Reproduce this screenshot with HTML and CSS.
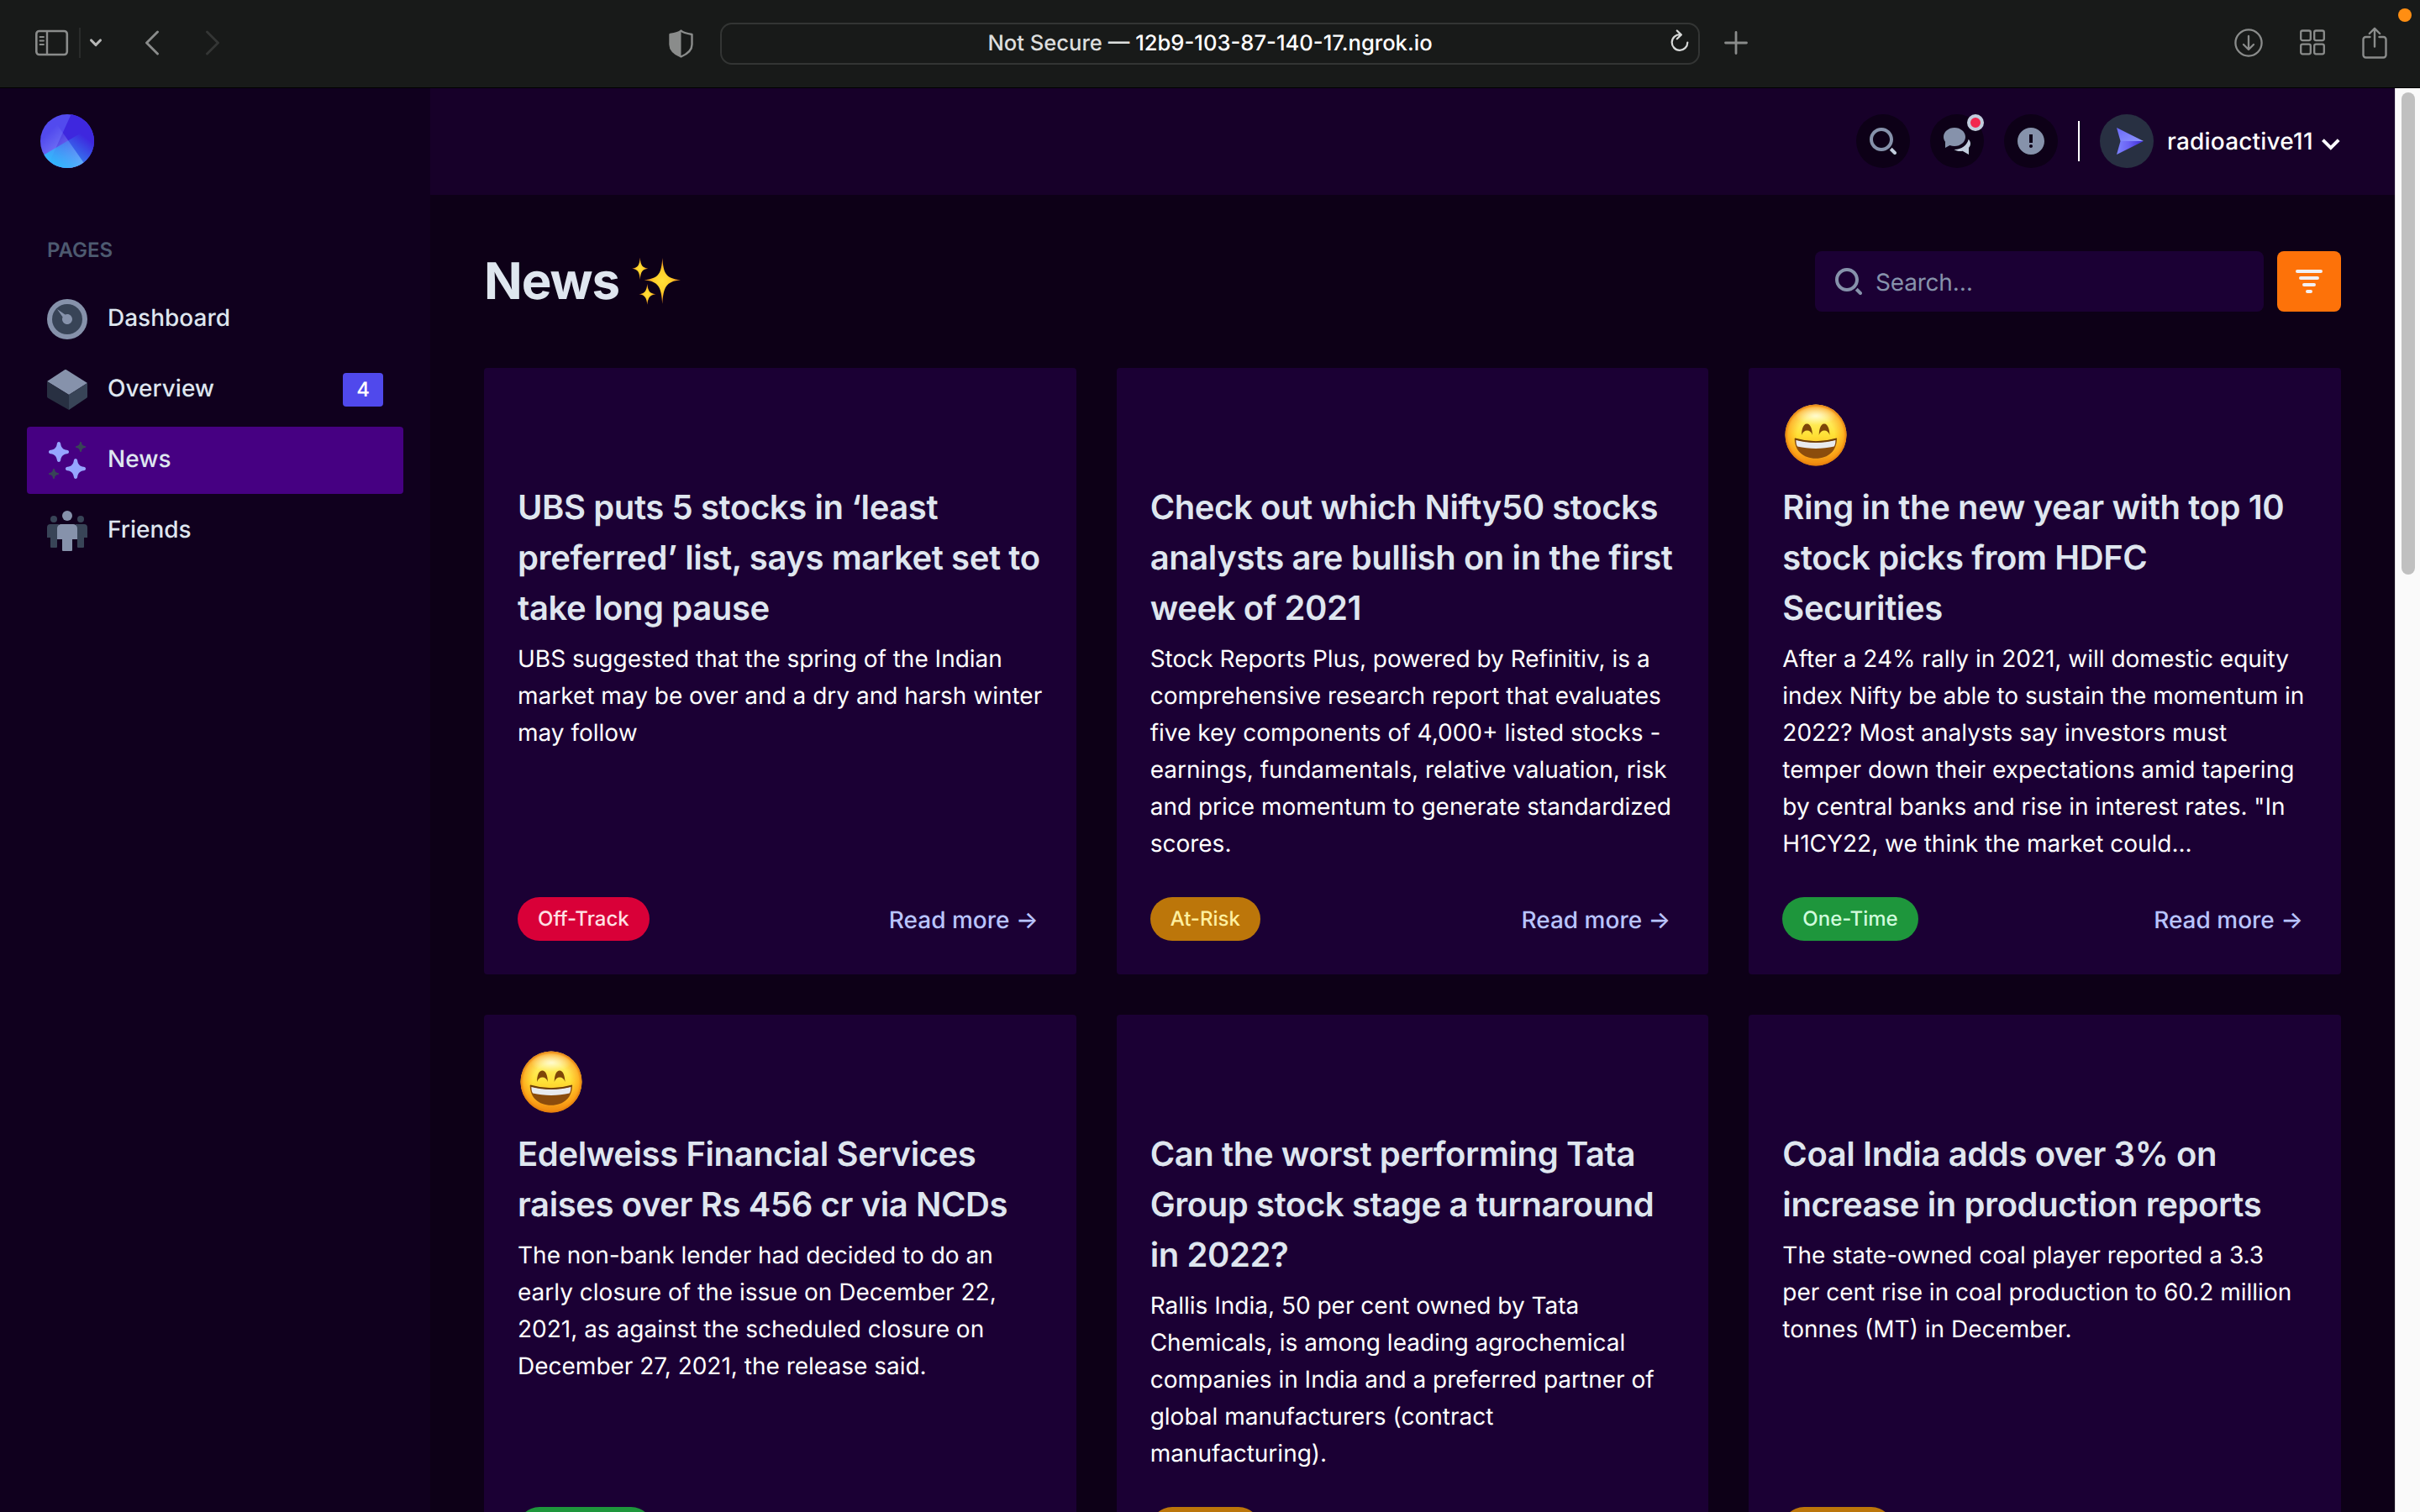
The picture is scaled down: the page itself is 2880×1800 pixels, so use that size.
FILE: index.html
```html
<!DOCTYPE html>
<html lang="en">
<head>
<meta charset="utf-8">
<title>News</title>
<link rel="stylesheet" href="styles.css">
</head>
<body>
<svg class="defs" width="0" height="0" aria-hidden="true">
  <defs>
    <linearGradient id="logo-a" x1="28.538%" y1="20.229%" x2="100%" y2="108.156%"><stop stop-color="#9fb0ff" stop-opacity="0" offset="0%"/><stop stop-color="#9fb0ff" offset="100%"/></linearGradient>
    <linearGradient id="logo-b" x1="88.638%" y1="29.267%" x2="22.42%" y2="100%"><stop stop-color="#2db9fd" stop-opacity="0" offset="0%"/><stop stop-color="#2db9fd" offset="100%"/></linearGradient>
    <linearGradient id="plane-top" x1="0" y1="0" x2="1" y2="1"><stop stop-color="#6a68f8" offset="0"/><stop stop-color="#8f97ff" offset="1"/></linearGradient>
    <linearGradient id="plane-bottom" x1="0" y1="0" x2="1" y2="0"><stop stop-color="#7d83ff" offset="0"/><stop stop-color="#6a62f4" offset=".45"/><stop stop-color="#3a28d4" offset="1"/></linearGradient>
    <radialGradient id="star-fill"><stop stop-color="#ffe03a" offset="0"/><stop stop-color="#ffcf2a" offset=".45"/><stop stop-color="#e8801c" offset="1"/></radialGradient>
    <linearGradient id="face-fill" x1="0" y1="0" x2="0" y2="1"><stop stop-color="#ffe98a" offset="0"/><stop stop-color="#fff06a" offset=".2"/><stop stop-color="#ffe136" offset=".5"/><stop stop-color="#fbb01e" offset=".82"/><stop stop-color="#dd7c0a" offset="1"/></linearGradient>
    <radialGradient id="face-rim" cx=".5" cy=".5" r=".5"><stop stop-color="#ff9a10" stop-opacity="0" offset=".6"/><stop stop-color="#fb9412" stop-opacity=".6" offset=".9"/><stop stop-color="#e07a0c" offset="1"/></radialGradient>
    <radialGradient id="face-shine" cx=".5" cy=".5" r=".5"><stop stop-color="#fffff0" stop-opacity=".75" offset="0"/><stop stop-color="#fffde0" stop-opacity="0" offset="1"/></radialGradient>
    <symbol id="face" viewBox="0 0 74 74">
      <circle cx="37" cy="37" r="36.500" fill="url(#face-fill)"/>
      <circle cx="37" cy="37" r="36.500" fill="url(#face-rim)"/>
      <ellipse cx="37" cy="14" rx="24" ry="11" fill="url(#face-shine)"/>
      <path d="M20 37c.2-8.500 2.500-13.500 6.400-13.500S32.600 28.500 33 37c-1.700-7.500-11-7.500-13 0zM40.700 37c.2-8.500 2.500-13.500 6.300-13.500s6.100 5 6.500 13.500c-1.700-7.500-11-7.500-12.800 0z" fill="#7e4608"/>
      <path d="M11.700 41c16 4.800 34.300 4.800 50.300 0C62 55.500 52 64.800 37 64.800S11.700 55.500 11.700 41z" fill="#8b4c0c"/>
      <path d="M13.400 43c15 4 32 4 47 0 0 3.500-.6 5.800-1.700 7.600-13.500 3.300-30 3.300-43.600 0-1.100-1.800-1.700-4.100-1.700-7.600z" fill="#e8eaee"/>
      <path d="M12 41.200c16 4.800 34 4.800 50 0" fill="none" stroke="#6b3c08" stroke-width="1.600"/>
    </symbol>
    <symbol id="magnifier" viewBox="0 0 16 16">
      <path d="M7 14c-3.860 0-7-3.140-7-7s3.140-7 7-7 7 3.140 7 7-3.140 7-7 7zM7 2C4.243 2 2 4.243 2 7s2.243 5 5 5 5-2.243 5-5-2.243-5-5-5z"/>
      <path fill="currentColor" d="M15.707 14.293L13.314 11.900a8.019 8.019 0 01-1.414 1.414l2.393 2.393a.997.997 0 001.414 0 .999.999 0 000-1.414z"/>
    </symbol>
  </defs>
</svg>

<div class="toolbar">
  <div class="tools">
    <svg class="i-panel" width="40" height="32" viewBox="0 0 40 32" fill="none" stroke="#8a8c8b"><rect x="1.300" y="2" width="36.500" height="28" rx="3.500" stroke-width="2.600"/><path d="M14 2v28" stroke-width="2.400"/><path d="M5.500 9h4.500M5.500 13.500h4.500M5.500 18h4.500" stroke-width="1.800" stroke-linecap="round"/></svg>
    <span class="tool-rule"></span>
    <svg class="i-down" width="16" height="12" viewBox="0 0 16 12" fill="none" stroke="#b6b7b6" stroke-width="3.200" stroke-linecap="round" stroke-linejoin="round"><path d="M2.600 3l5.400 5.500L13.400 3"/></svg>
    <svg class="i-back" width="18" height="30" viewBox="0 0 18 30" fill="none" stroke="#8a8c8b" stroke-width="2.900" stroke-linecap="round" stroke-linejoin="round"><path d="M15.500 2L2.500 15l13 13"/></svg>
    <svg class="i-forward" width="18" height="30" viewBox="0 0 18 30" fill="none" stroke="#343635" stroke-width="2.900" stroke-linecap="round" stroke-linejoin="round"><path d="M2.500 2l13 13-13 13"/></svg>
  </div>
  <svg class="i-shield" width="29" height="34" viewBox="0 0 29 34"><path d="M14.500 1.500C17 4 22 5 27.500 6v12c0 7-6 11.500-13 14.500-7-3-13-7.500-13-14.500V6C7 5 12 4 14.500 1.500z" fill="none" stroke="#8a8c8b" stroke-width="2.400" stroke-linejoin="round"/><path d="M14.500 1v32C7 30 1 25 1 18V6c5.500-1 11-2 13.500-5z" fill="#8a8c8b"/></svg>
  <div class="address">
    <span class="url"><span class="insecure">Not Secure — </span>12b9-103-87-140-17.ngrok.io</span>
    <svg class="i-reload" width="24" height="28" viewBox="0 0 24 28" fill="none" stroke="#d8dad9" stroke-width="2.200" stroke-linecap="round" stroke-linejoin="round"><path d="M12.500 6.200A9.300 9.300 0 1 0 21.300 15.500M8.800 1.500l5 4.900-5 4.900"/></svg>
  </div>
  <svg class="i-plus" width="28" height="28" viewBox="0 0 28 28" stroke="#8a8c8b" stroke-width="2.800" stroke-linecap="round"><path d="M14 1.500v25M1.500 14h25"/></svg>
  <div class="tools-right">
    <svg width="34" height="38" viewBox="0 0 34 38" fill="none" stroke="#8a8c8b" stroke-width="2.300" stroke-linecap="round" stroke-linejoin="round"><circle cx="17" cy="19" r="15.600"/><path d="M17 11v15.500M11 21l6 6 6-6"/></svg>
    <svg width="30" height="38" viewBox="0 0 30 38" fill="none" stroke="#8a8c8b" stroke-width="2.300"><rect x="1.200" y="4.500" width="11.600" height="11.600" rx="2"/><rect x="17.200" y="4.500" width="11.600" height="11.600" rx="2"/><rect x="1.200" y="20.700" width="11.600" height="11.600" rx="2"/><rect x="17.200" y="20.700" width="11.600" height="11.600" rx="2"/></svg>
    <svg width="30" height="38" viewBox="0 0 30 38" fill="none" stroke="#8a8c8b" stroke-width="2.400" stroke-linecap="round" stroke-linejoin="round"><path d="M9.500 12H4.500a3 3 0 0 0-3 3v18.500a3 3 0 0 0 3 3h21a3 3 0 0 0 3-3V15a3 3 0 0 0-3-3h-5M15 23.500V2M8.800 8L15 1.800 21.200 8"/></svg>
  </div>
  <span class="rec-dot"></span>
</div>

<div class="app">
  <aside class="sidebar">
    <svg class="logo" width="64" height="64" viewBox="0 0 32 32"><rect fill="#524aee" width="32" height="32" rx="16"/><path d="M18.277.16C26.035 1.267 32 7.938 32 16c0 8.837-7.163 16-16 16a15.937 15.937 0 01-10.426-3.863L18.277.161z" fill="#3e27de"/><path d="M7.404 2.503l18.339 26.190A15.930 15.930 0 0116 32C7.163 32 0 24.837 0 16 0 10.327 2.952 5.344 7.404 2.503z" fill="url(#logo-a)"/><path d="M2.223 24.140L29.777 7.860A15.926 15.926 0 0132 16c0 8.837-7.163 16-16 16-5.864 0-10.991-3.154-13.777-7.860z" fill="url(#logo-b)"/></svg>
    <h3 class="group">Pages</h3>
    <nav class="nav">
      <a class="nav-item">
        <svg class="nav-icon" viewBox="0 0 24 24"><circle cx="12" cy="12" r="12" fill="#8692ab"/><circle cx="12" cy="12" r="9" fill="#384457"/><path d="M12 15c-1.654 0-3-1.346-3-3 0-.462.113-.894.3-1.285L6 6l4.714 3.301A2.973 2.973 0 0112 9c1.654 0 3 1.346 3 3s-1.346 3-3 3z" fill="#8692ab"/></svg>
        <span>Dashboard</span>
      </a>
      <a class="nav-item">
        <svg class="nav-icon" viewBox="0 0 24 24"><path fill="#8692ab" d="M13 15l11-7L11.504.136a1 1 0 00-1.019.007L0 7l13 8z"/><path fill="#283042" d="M13 15L0 7v9c0 .355.189.685.496.864L13 24v-9z"/><path fill="#384457" d="M13 15.047V24l10.573-7.181A.999.999 0 0024 16V8l-11 7.047z"/></svg>
        <span>Overview</span>
        <span class="count">4</span>
      </a>
      <a class="nav-item active">
        <svg class="nav-icon" viewBox="0 0 24 24"><path fill="#96a5ff" d="M7 1c.7 0 1 .5 1.100 1.200.3 2.200 1.500 3.400 3.700 3.700C12.600 6 13 6.300 13 7s-.4 1-1.200 1.100c-2.200.3-3.400 1.500-3.700 3.700C8 12.600 7.700 13 7 13s-1-.4-1.100-1.200C5.600 9.600 4.400 8.400 2.200 8.100 1.400 8 1 7.700 1 7s.4-1 1.200-1.100c2.200-.3 3.400-1.500 3.700-3.700C6 1.500 6.300 1 7 1zM17 11c.7 0 1 .5 1.100 1.200.3 2.200 1.500 3.400 3.700 3.700.8.1 1.200.4 1.200 1.100s-.4 1-1.200 1.100c-2.200.3-3.400 1.500-3.700 3.700-.1.800-.4 1.200-1.100 1.200s-1-.4-1.100-1.200c-.3-2.200-1.500-3.400-3.700-3.700-.8-.1-1.200-.4-1.200-1.100s.4-1 1.200-1.100c2.200-.3 3.400-1.500 3.700-3.700.1-.7.400-1.200 1.100-1.200z"/><path fill="#384457" d="M20 1c.35 0 .5.250.55.600.15 1.100.75 1.700 1.850 1.850.4.050.6.200.6.550s-.2.500-.6.550c-1.100.15-1.700.75-1.850 1.850-.05.400-.2.600-.55.600s-.5-.2-.55-.6C19.300 5.300 18.700 4.700 17.600 4.550 17.200 4.500 17 4.350 17 4s.2-.5.600-.55c1.100-.15 1.700-.75 1.850-1.850.05-.35.200-.6.550-.6zM4 17c.35 0 .5.250.55.600.15 1.100.75 1.700 1.850 1.850.4.050.6.200.6.550s-.2.500-.6.550c-1.100.15-1.700.75-1.850 1.850-.05.400-.2.600-.55.600s-.5-.2-.55-.6c-.15-1.100-.75-1.700-1.850-1.850C1.200 20.500 1 20.350 1 20s.2-.5.600-.55c1.100-.15 1.700-.75 1.850-1.850.05-.35.200-.6.550-.6z"/></svg>
        <span>News</span>
      </a>
      <a class="nav-item">
        <svg class="nav-icon" viewBox="0 0 24 24"><g fill="#384457"><circle cx="4" cy="5" r="2"/><circle cx="20" cy="5" r="2"/><path d="M2 8h5v8H6v5.500a.5.500 0 0 1-.5.500h-3a.5.500 0 0 1-.5-.5V16H0v-6a2 2 0 0 1 2-2zM22 8h-5v8h1v5.500a.5.500 0 0 0 .5.500h3a.5.500 0 0 0 .5-.5V16h2v-6a2 2 0 0 0-2-2z"/></g><g fill="#8692ab"><circle cx="12" cy="3" r="3"/><path d="M8.500 8h7A2.500 2.500 0 0 1 18 10.500V17h-3v6.500a.5.500 0 0 1-.5.500h-5a.5.500 0 0 1-.5-.5V17H6v-6.500A2.500 2.500 0 0 1 8.500 8z"/></g></svg>
        <span>Friends</span>
      </a>
    </nav>
  </aside>

  <div class="content">
    <header class="header">
      <button class="round"><svg class="two-tone" width="32" height="32"><use href="#magnifier"/></svg></button>
      <button class="round"><svg width="32" height="32" viewBox="0 0 16 16"><path fill="#8692ab" d="M6.500 0C2.910 0 0 2.462 0 5.500c0 1.075.37 2.074 1 2.922V12l2.699-1.542A7.454 7.454 0 006.500 11c3.590 0 6.500-2.462 6.500-5.500S10.090 0 6.500 0z"/><path fill="#c2cddd" d="M16 9.500c0-.987-.429-1.897-1.147-2.639C14.124 10.348 10.660 13 6.500 13c-.103 0-.202-.018-.305-.021C7.231 13.617 8.556 14 10 14c.449 0 .886-.04 1.307-.11L15 16v-4h-.012C15.627 11.285 16 10.425 16 9.500z"/></svg><span class="unread"></span></button>
      <button class="round"><svg width="32" height="32" viewBox="0 0 16 16"><path fill="#8692ab" d="M8 0C3.600 0 0 3.600 0 8s3.600 8 8 8 8-3.600 8-8-3.600-8-8-8zm0 12c-.6 0-1-.4-1-1s.4-1 1-1 1 .4 1 1-.4 1-1 1zm1-3H7V4h2v5z"/></svg></button>
      <span class="rule"></span>
      <div class="user">
        <svg class="avatar" width="64" height="64" viewBox="0 0 64 64"><circle cx="32" cy="32" r="32" fill="#283042"/><path d="M20 16l32 16H24.500z" fill="url(#plane-top)"/><path d="M20 48l32-16H24.500z" fill="url(#plane-bottom)"/></svg>
        <span class="name">radioactive11</span>
        <svg class="caret" width="24" height="24" viewBox="0 0 12 12" fill="#fff"><path d="M5.900 11.400L.5 6l1.400-1.400 4 4 4-4L11.300 6z"/></svg>
      </div>
    </header>

    <main class="main">
      <div class="heading">
        <h1>News</h1>
        <svg class="sparkles" width="58" height="58" viewBox="0 0 58 58" fill="url(#star-fill)"><path d="M36.300 1C37.600 20 40.500 25.500 58 27.300 40.500 29.100 37.600 36 36.300 56 35 36 32.100 29.100 14.500 27.300 32.100 25.500 35 20 36.300 1z"/><path d="M9.700.5c.8 9.200 2.300 12.200 9.500 13.200C12 14.700 10.500 17.700 9.700 27 8.900 17.700 7.400 14.700.2 13.700 7.400 12.700 8.900 9.700 9.700.5z"/><path d="M18.300 32c.9 8.300 2.700 11.300 10 12.300-7.300 1-9.100 4.200-10 12.500-.9-8.300-2.700-11.500-10-12.500 7.300-1 9.100-4 10-12.300z"/></svg>
        <label class="search"><svg width="32" height="32"><use href="#magnifier"/></svg><span>Search…</span></label>
        <button class="filter"><svg width="32" height="32" viewBox="0 0 16 16" fill="#f1f0f5"><path d="M9 15H7a1 1 0 010-2h2a1 1 0 010 2zM11 11H5a1 1 0 010-2h6a1 1 0 010 2zM13 7H3a1 1 0 010-2h10a1 1 0 010 2zM15 3H1a1 1 0 010-2h14a1 1 0 010 2z"/></svg></button>
      </div>

      <div class="cards">
        <article class="card">
          <div class="mood"></div>
          <h2>UBS puts 5 stocks in ‘least preferred’ list, says market set to take long pause</h2>
          <p>UBS suggested that the spring of the Indian market may be over and a dry and harsh winter may follow</p>
          <footer><span class="pill off">Off-Track</span><a class="more">Read more -&gt;</a></footer>
        </article>
        <article class="card">
          <div class="mood"></div>
          <h2>Check out which Nifty50 stocks analysts are bullish on in the first week of 2021</h2>
          <p>Stock Reports Plus, powered by Refinitiv, is a comprehensive research report that evaluates five key components of 4,000+ listed stocks - earnings, fundamentals, relative valuation, risk and price momentum to generate standardized scores.</p>
          <footer><span class="pill risk">At-Risk</span><a class="more">Read more -&gt;</a></footer>
        </article>
        <article class="card">
          <div class="mood"><svg width="74" height="74"><use href="#face"/></svg></div>
          <h2>Ring in the new year with top 10 stock picks from HDFC Securities</h2>
          <p>After a 24% rally in 2021, will domestic equity index Nifty be able to sustain the momentum in 2022? Most analysts say investors must temper down their expectations amid tapering by central banks and rise in interest rates. "In H1CY22, we think the market could...</p>
          <footer><span class="pill once">One-Time</span><a class="more">Read more -&gt;</a></footer>
        </article>
        <article class="card">
          <div class="mood"><svg width="74" height="74"><use href="#face"/></svg></div>
          <h2>Edelweiss Financial Services raises over Rs 456 cr via NCDs</h2>
          <p>The non-bank lender had decided to do an early closure of the issue on December 22, 2021, as against the scheduled closure on December 27, 2021, the release said.</p>
          <footer><span class="pill once">One-Time</span><a class="more">Read more -&gt;</a></footer>
        </article>
        <article class="card">
          <div class="mood"></div>
          <h2>Can the worst performing Tata Group stock stage a turnaround in 2022?</h2>
          <p>Rallis India, 50 per cent owned by Tata Chemicals, is among leading agrochemical companies in India and a preferred partner of global manufacturers (contract manufacturing).</p>
          <footer><span class="pill risk">At-Risk</span><a class="more">Read more -&gt;</a></footer>
        </article>
        <article class="card">
          <div class="mood"></div>
          <h2>Coal India adds over 3% on increase in production reports</h2>
          <p>The state-owned coal player reported a 3.3 per cent rise in coal production to 60.2 million tonnes (MT) in December.</p>
          <footer><span class="pill risk">At-Risk</span><a class="more">Read more -&gt;</a></footer>
        </article>
      </div>
    </main>
  </div>

  <div class="scrollbar"><div class="thumb"></div></div>
</div>
</body>
</html>
```
FILE: styles.css
```css
* { box-sizing: border-box; margin: 0; padding: 0; }
html, body { width: 2880px; height: 1800px; overflow: hidden; }
body {
  display: flex;
  flex-direction: column;
  background: #0d0017;
  color: #fff;
  font-family: Inter, "Liberation Sans", sans-serif;
  font-size: 28px;
  line-height: 44px;
  text-rendering: geometricPrecision;
  -webkit-font-smoothing: antialiased;
}
svg { display: block; flex: none; }
button { border: 0; font: inherit; color: inherit; }
.defs { position: absolute; }

/* Browser toolbar */
.toolbar {
  position: relative;
  flex: none;
  display: flex;
  align-items: center;
  height: 105px;
  padding: 0 39px 0 42px;
  background: #181a19;
  border-bottom: 1px solid #000;
}
.tools { display: flex; align-items: center; width: 754px; margin-top: -2px; }
.tool-rule { width: 2px; height: 36px; margin-left: 12px; background: #2a2c2b; }
.i-down { margin-left: 10px; }
.i-back { margin-left: 50px; }
.i-forward { margin-left: 54px; }
.address {
  position: relative;
  display: flex;
  align-items: center;
  justify-content: center;
  width: 1166px;
  height: 50px;
  margin-left: 32px;
  border: 2px solid #333534;
  border-radius: 14px;
  font-size: 25.600px;
  font-weight: 500;
  line-height: 46px;
}
.url { margin-bottom: 1px; white-space: pre; }
.insecure { color: #dcdedd; }
.i-reload { position: absolute; right: 10px; top: 6px; }
.i-plus { margin-left: 29px; margin-top: -2px; }
.tools-right { display: flex; gap: 44px; margin-left: auto; margin-top: -3px; }
.rec-dot {
  position: absolute;
  top: 10px;
  right: 10px;
  width: 16px;
  height: 16px;
  border-radius: 50%;
  background: #ff8e12;
}

.app { flex: 1; display: flex; min-height: 0; overflow: hidden; }

/* Sidebar */
.sidebar { flex: none; width: 512px; padding: 31px 32px; background: #10001e; }
.logo { margin-left: 16px; }
.group {
  margin: 80px 0 0 24px;
  color: #4d5a70;
  font-size: 24px;
  font-weight: 600;
  line-height: 36px;
  text-transform: uppercase;
}
.nav { display: grid; gap: 4px; margin-top: 24px; }
.nav-item {
  display: flex;
  align-items: center;
  height: 80px;
  padding: 0 24px;
  border-radius: 4px;
  color: #dfe6ef;
  font-weight: 500;
}
.nav-item > span { margin-bottom: 4px; }
.nav-item.active { background: #460082; }
.nav-icon { width: 48px; height: 48px; margin-right: 24px; }
.nav-item > .count {
  width: 48px;
  height: 40px;
  margin: 0 0 0 auto;
  border-radius: 4px;
  background: #5049ec;
  color: #fff;
  font-size: 24px;
  line-height: 40px;
  text-align: center;
}

/* Header */
.content { flex: 1; min-width: 0; display: flex; flex-direction: column; }
.header {
  flex: none;
  display: flex;
  align-items: center;
  justify-content: flex-end;
  height: 127px;
  padding: 0 64px 1px;
  background: #170029;
}
.round {
  position: relative;
  display: grid;
  place-items: center;
  width: 64px;
  height: 64px;
  margin-right: 24px;
  border-radius: 50%;
  background: #0d0017;
}
.round svg, .search svg { fill: #8692ab; }
.two-tone { color: #c2cddd; }
.unread {
  position: absolute;
  top: 0;
  right: 0;
  width: 20px;
  height: 20px;
  border: 4px solid #c2cddd;
  border-radius: 50%;
  background: #f2284f;
}
.rule { width: 2px; height: 48px; margin-right: 24px; background: #fff; }
.user { display: flex; align-items: center; }
.name { width: 175px; margin: 0 8px 0 16px; font-weight: 500; letter-spacing: .2px; }

/* News page */
.main { padding: 64px; }
.heading { display: flex; align-items: center; height: 78px; margin-bottom: 64px; }
h1 {
  width: 159px;
  color: #dfe6ef;
  font-size: 60px;
  font-weight: 700;
  line-height: 78px;
  letter-spacing: -.018em;
}
.sparkles { margin-left: 17px; }
.search {
  display: flex;
  align-items: center;
  width: 534px;
  height: 72px;
  margin-left: auto;
  padding-left: 24px;
  border-radius: 8px;
  background: #1b0034;
  color: #8692ab;
}
.search span { margin: 2px 0 0 16px; letter-spacing: -.2px; }
.filter {
  display: grid;
  place-items: center;
  width: 76px;
  height: 72px;
  margin-left: 16px;
  border-radius: 8px;
  background: #fd7209;
}
.cards { display: grid; grid-template-columns: repeat(3, 1fr); gap: 48px; }
.card {
  display: flex;
  flex-direction: column;
  padding: 40px;
  border-radius: 4px;
  background: #1b0034;
}
.mood { height: 96px; padding: 3px; }
h2 {
  margin-bottom: 8px;
  color: #dfe6ef;
  font-size: 40px;
  font-weight: 600;
  line-height: 60px;
  letter-spacing: -.01em;
}
.card footer {
  display: flex;
  align-items: center;
  justify-content: space-between;
  margin-top: auto;
  padding-top: 42px;
}
.pill {
  height: 52px;
  padding: 0 24px;
  border-radius: 26px;
  font-size: 24px;
  font-weight: 500;
  line-height: 51px;
}
.pill.off { background: #d90038; color: #ffe0e4; }
.pill.risk { background: #bc760a; color: #fff0a0; }
.pill.once { background: #1e963c; color: #d0fbdc; }
.more { height: 52px; margin-right: 5px; color: #b9c4ff; font-weight: 500; line-height: 54px; }

/* Page scrollbar */
.scrollbar {
  flex: none;
  width: 30px;
  padding: 5px 0 0 7px;
  border-left: 1px solid #e0e0e0;
  background: #fafafa;
}
.thumb { width: 16px; height: 574px; border-radius: 8px; background: #c0c0c0; }
```
